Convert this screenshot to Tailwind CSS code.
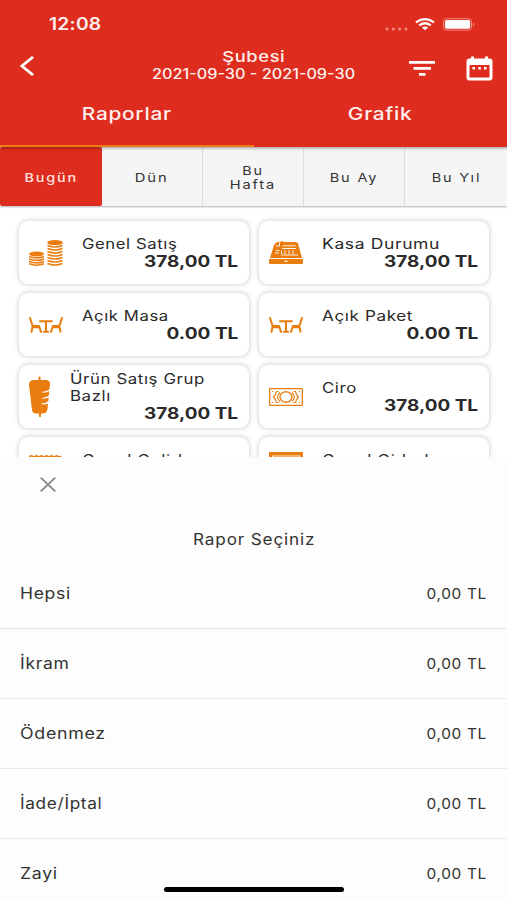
<!DOCTYPE html>
<html lang="tr">
<head>
<meta charset="utf-8">
<title>Raporlar</title>
<script src="https://cdn.jsdelivr.net/npm/@tailwindcss/browser@4"></script>
</head>
<body class="w-[507px] h-[900px] overflow-hidden bg-white font-['Inter',sans-serif] text-[#292929]">
<svg class="hidden">
  <symbol id="table" viewBox="0 0 34 16"><g fill="none" stroke="#e97d10" stroke-width="2" stroke-linecap="round" stroke-linejoin="round"><path d="M1 1 3.700 9 2.500 14.800M3.700 9H10L12 14.800M4 10.200H9.500M33 1 30.300 9 31.500 14.800M30.300 9H24L22 14.800M24.500 10.200H30M11 4.300H23M17 4.300V14.500M14.800 14.700H19.200"/></g></symbol>
</svg>
<div class="flex flex-col h-[900px]">
  <header class="relative z-10 h-[147px] shrink-0 flex flex-col bg-[#de2d1e] text-[#fff0ee] shadow-[0_1px_3px_rgba(0,0,0,0.4)]">
    <div class="h-[49px] flex items-center justify-between pl-[49px] pr-[31px]">
      <span class="inline-block origin-left scale-x-[1.13] text-[17px] font-semibold tracking-[0.2px]">12:08</span>
      <div class="flex items-center">
        <svg class="w-[26px] h-[10px] mt-[8px]" viewBox="0 0 26 10" fill="#f18b80"><circle cx="3" cy="5" r="1.500"/><circle cx="9.300" cy="5" r="1.500"/><circle cx="15.600" cy="5" r="1.500"/><circle cx="22" cy="5" r="1.500"/></svg>
        <svg class="w-[20px] h-[13px] ml-[5px]" viewBox="0 0 20 13" fill="none" stroke="#fff" stroke-width="2.300"><path d="M1 4.400Q10-2 19 4.400M4.200 7.400Q10 3 15.800 7.400"/><path d="M6.800 9.600Q10 7.400 13.200 9.600L10 12.300Z" fill="#fff" stroke="none"/></svg>
        <svg class="w-[33px] h-[13px] ml-[8px]" viewBox="0 0 33 13"><rect x=".5" y=".7" width="28" height="11.400" rx="3" fill="none" stroke="#f08a80"/><rect x="2" y="2" width="25.200" height="8.800" rx="1.800" fill="#fff"/><path d="M30 4.300Q32.800 6.400 30 8.500Z" fill="#ee8378"/></svg>
      </div>
    </div>
    <div class="h-[36px] flex">
      <div class="w-[110px] pl-[20px] pt-[7px]"><svg class="w-[15px] h-[20px]" viewBox="0 0 15 20" fill="none" stroke="#fff" stroke-width="2.800"><path d="M13 1 2 10 13 19"/></svg></div>
      <div class="w-[287px] flex flex-col items-center whitespace-nowrap">
        <span class="leading-[15px] text-[15px] scale-x-[1.22] font-medium tracking-[0.5px]">Şubesi</span>
        <span class="leading-[19px] text-[14px] scale-x-[1.16] font-medium">2021-09-30 - 2021-09-30</span>
      </div>
      <svg class="w-[26px] h-[16px] mt-[12px] ml-[12px]" viewBox="0 0 26 16" fill="#fff"><path d="M0 0H26V2.700H0ZM4.500 6H22V8.700H4.500ZM10 12H16.500V14.700H10Z"/></svg>
      <svg class="w-[27px] h-[25px] mt-[7px] ml-[31px]" viewBox="0 0 27 25"><path fill="#fff" fill-rule="evenodd" d="M5 .5H8V2.500H19V.5H22V2.500H23.500Q26.500 2.500 26.500 5.500V21.500Q26.500 24.500 23.500 24.500H3.500Q.5 24.500 .5 21.500V5.500Q.5 2.500 3.500 2.500H5ZM3.500 9V21.500H23.500V9Z"/><path fill="#fff" d="M6.500 11H9V13.500H6.500ZM12.300 11H14.800V13.500H12.300ZM18 11H20.500V13.500H18Z"/></svg>
    </div>
    <div class="h-[62px] flex text-[17.5px] font-medium">
      <div class="w-[254px] h-full pb-[1px] border-b-[2px] border-[#f07c13] flex items-center justify-center"><span class="scale-x-[1.19] tracking-[0.6px]">Raporlar</span></div>
      <div class="w-[253px] h-full pb-[3px] flex items-center justify-center"><span class="scale-x-[1.19] tracking-[0.6px]">Grafik</span></div>
    </div>
  </header>
  <nav class="h-[59px] shrink-0 grid grid-cols-[102px_101px_101px_101px_102px] bg-[#f5f5f5] text-[12px] leading-[13px] tracking-[1.5px] text-center text-[#333] shadow-[0_1px_2px_rgba(0,0,0,0.3)]">
    <div class="pt-[1px] flex items-center justify-center rounded-[2px] bg-[#de2d1e] text-[#ffe3df] font-medium"><span class="scale-x-[1.2]">Bugün</span></div>
    <div class="pt-[1px] flex items-center justify-center border-r border-[#dedede]"><span class="scale-x-[1.23]">Dün</span></div>
    <div class="pt-[1px] flex flex-col items-center justify-center border-r border-[#dedede]"><span class="leading-[14px] scale-x-[1.2]">Bu</span><span class="leading-[13px] scale-x-[1.22]">Hafta</span></div>
    <div class="pt-[1px] flex items-center justify-center border-r border-[#dedede]"><span class="scale-x-[1.21]">Bu Ay</span></div>
    <div class="pt-[1px] flex items-center justify-center"><span class="scale-x-[1.21]">Bu Yıl</span></div>
  </nav>
  <main class="h-[251px] shrink-0 overflow-hidden pt-[15px] pl-[19px] pr-[18px] whitespace-nowrap">
    <div class="grid grid-cols-[230px_230px] gap-x-[10px] gap-y-[9px] auto-rows-[63px]">
      <section class="rounded-[9px] bg-white shadow-[0_0_4px_1px_rgba(0,0,0,0.17)] flex items-center pl-[10px] pr-[11px]">
        <svg class="w-[34px] h-[26px]" viewBox="0 0 34 26" fill="#e97d10"><ellipse cx="7.500" cy="14" rx="7.500" ry="2.500"/><ellipse cx="26" cy="2.700" rx="7.800" ry="2.600"/><path fill="none" stroke="#e97d10" stroke-width="1.500" d="M0 16.500Q7.500 19.500 15 16.500M0 19Q7.500 22 15 19M0 21.500Q7.500 24.500 15 21.500M0 23.800Q7.500 26.500 15 23.800M18.500 5.500Q26 8.500 33.500 5.500M18.500 8.500Q26 11.500 33.500 8.500M18.500 11.500Q26 14.500 33.500 11.500M18.500 14.500Q26 17.500 33.500 14.500M18.500 17.500Q26 20.500 33.500 17.500M18.500 20.500Q26 23.500 33.500 20.500M18.500 23.500Q26 26.500 33.500 23.500"/></svg>
        <div class="flex-1 pl-[19px] flex flex-col"><span class="self-start origin-left text-[14px] leading-[17px] tracking-[0.5px] scale-x-[1.19]">Genel Satış</span><b class="self-end origin-right text-[15.5px] leading-[19px] font-bold scale-x-[1.22]">378,00 TL</b></div>
      </section>
      <section class="rounded-[9px] bg-white shadow-[0_0_4px_1px_rgba(0,0,0,0.17)] flex items-center pl-[10px] pr-[11px]">
        <svg class="w-[34px] h-[24px]" viewBox="0 0 34 24"><path fill="#e97d10" d="M8 1H12V0H14V1H27Q28.500 1 29 2.500L33 17H1L5 4Z"/><path fill="#e97d10" d="M0 18H34V22Q34 23 33 23H1Q0 23 0 22Z"/><path fill="none" stroke="#fff" stroke-width=".9" d="M7 5H10.500V1.500M13.500 4.800H26.500M13 7.500H27M12.500 9.500V13M16 9V13M20 9V13M24 9V13M7 9.500H10.500M6 12H10M12 14H29"/><path stroke="#fff" stroke-width="1.200" d="M15.500 20.300H18.500"/></svg>
        <div class="flex-1 pl-[19px] flex flex-col"><span class="self-start origin-left text-[14px] leading-[17px] tracking-[0.5px] scale-x-[1.25]">Kasa Durumu</span><b class="self-end origin-right text-[15.5px] leading-[19px] font-bold scale-x-[1.22]">378,00 TL</b></div>
      </section>
      <section class="rounded-[9px] bg-white shadow-[0_0_4px_1px_rgba(0,0,0,0.17)] flex items-center pl-[10px] pr-[11px]">
        <svg class="w-[34px] h-[16px]"><use href="#table"/></svg>
        <div class="flex-1 pl-[19px] flex flex-col"><span class="self-start origin-left text-[14px] leading-[17px] tracking-[0.5px] scale-x-[1.19]">Açık Masa</span><b class="self-end origin-right text-[15.5px] leading-[19px] font-bold scale-x-[1.23]">0.00 TL</b></div>
      </section>
      <section class="rounded-[9px] bg-white shadow-[0_0_4px_1px_rgba(0,0,0,0.17)] flex items-center pl-[10px] pr-[11px]">
        <svg class="w-[34px] h-[16px]"><use href="#table"/></svg>
        <div class="flex-1 pl-[19px] flex flex-col"><span class="self-start origin-left text-[14px] leading-[17px] tracking-[0.5px] scale-x-[1.22]">Açık Paket</span><b class="self-end origin-right text-[15.5px] leading-[19px] font-bold scale-x-[1.23]">0.00 TL</b></div>
      </section>
      <section class="rounded-[9px] bg-white shadow-[0_0_4px_1px_rgba(0,0,0,0.17)] flex items-center pl-[10px] pr-[11px]">
        <svg class="w-[21px] h-[42px]" viewBox="0 0 21 42"><path fill="#e97d10" d="M9.500 1Q10.500 0 11.500 1V4H17Q21.500 4.500 21 8.500L20.600 12.500Q20 15 12 16Q17 17.500 20.200 15L20 19Q18 21.500 11.500 22Q16 23.500 19.700 21.500L19.400 25Q17 27.500 11.500 27.500Q15 29.500 19 27.500L18.500 33Q18 37 14 37.500H12V40.500Q11 42 10 40.500V37.500H7Q3.500 37.500 3 34L0 9Q0 4.500 4 4H9.500Z"/></svg>
        <div class="flex-1 pl-[20px] pt-[1px] flex flex-col"><span class="self-start origin-left text-[14px] leading-[16.5px] tracking-[0.5px] scale-x-[1.2]">Ürün Satış Grup<br>Bazlı</span><b class="self-end origin-right text-[15.5px] leading-[19px] font-bold scale-x-[1.22]">378,00 TL</b></div>
      </section>
      <section class="rounded-[9px] bg-white shadow-[0_0_4px_1px_rgba(0,0,0,0.17)] flex items-center pl-[10px] pr-[11px]">
        <svg class="w-[34px] h-[18px]" viewBox="0 0 34 18" fill="none" stroke="#e97d10"><rect x=".7" y=".7" width="32.600" height="16.600" rx=".6" stroke-width="1.300"/><ellipse cx="17" cy="9" rx="6" ry="5.300" stroke-width="1.400"/><path stroke-width="1.200" d="M9.500 3.500H7.500Q7 6.500 4.500 9 7 11.500 7.500 14.500H9.500M24.500 3.500H26.500Q27 6.500 29.500 9 27 11.500 26.500 14.500H24.500M11 4.500Q6 9 11 13.500M23 4.500Q28 9 23 13.500"/><path stroke-width="1.200" d="M3 3.500H4.200M29.800 3.500H31M3 14.500H4.200M29.800 14.500H31"/></svg>
        <div class="flex-1 pl-[19px] flex flex-col"><span class="self-start origin-left text-[14px] leading-[17px] tracking-[0.5px] scale-x-[1.2]">Ciro</span><b class="self-end origin-right text-[15.5px] leading-[19px] font-bold scale-x-[1.22]">378,00 TL</b></div>
      </section>
      <section class="rounded-[9px] bg-white shadow-[0_0_4px_1px_rgba(0,0,0,0.17)] flex items-center pl-[10px] pr-[11px]">
        <svg class="w-[34px] h-[28px]" viewBox="0 0 34 28" fill="none" stroke="#e97d10" stroke-width="1.600"><path d="M0 1.500 2.500 .8 5 2 7.500 .8 10 2 12.500 .8 15 2 17.500 .8 20 2 22.500 .8 25 2 27.500 .8 30 2 32 1.200M1 4V27H31V4"/></svg>
        <div class="flex-1 pl-[19px] flex flex-col"><span class="self-start origin-left text-[14px] leading-[17px] tracking-[0.5px] scale-x-[1.22]">Genel Gelirler</span><b class="self-end origin-right text-[15.5px] leading-[18px] font-bold scale-x-[1.22]">0,00 TL</b></div>
      </section>
      <section class="rounded-[9px] bg-white shadow-[0_0_4px_1px_rgba(0,0,0,0.17)] flex items-center pl-[10px] pr-[11px]">
        <svg class="w-[34px] h-[33px]" viewBox="0 0 34 33"><path fill="#e97d10" d="M0 0H34V7H31V3.500H3V7H0Z"/><path fill="#f4b26b" d="M4 3.500H30V30H4Z"/></svg>
        <div class="flex-1 pl-[19px] flex flex-col"><span class="self-start origin-left text-[14px] leading-[17px] tracking-[0.5px] scale-x-[1.22]">Genel Giderler</span><b class="self-end origin-right text-[15.5px] leading-[18px] font-bold scale-x-[1.22]">0,00 TL</b></div>
      </section>
    </div>
  </main>
  <div class="relative flex-1 flex flex-col bg-[#fdfdfd] text-[#333] overflow-hidden">
    <div class="h-[55px] shrink-0 pl-[40px] pt-[20px]"><svg class="w-[16px] h-[15px]" viewBox="0 0 16 15" fill="none" stroke="#858585" stroke-width="1.800"><path d="M.7.7 15.300 14.300M15.300.7.7 14.300"/></svg></div>
    <div class="h-[54px] shrink-0 flex justify-center items-center"><span class="pl-[1px] text-[16px] tracking-[0.8px] scale-x-[1.07]">Rapor Seçiniz</span></div>
    <div class="h-[63px] shrink-0 pb-[8px] px-[20px] border-b border-[#e2e2e2] flex items-center justify-between"><span class="pt-[1px] text-[15.5px] tracking-[0.6px] origin-left scale-x-[1.13]">Hepsi</span><span class="text-[14px] tracking-[0.6px] origin-right scale-x-[1.1]">0,00 TL</span></div>
    <div class="h-[70px] shrink-0 px-[20px] border-b border-[#e9e9e9] flex items-center justify-between"><span class="text-[15.5px] tracking-[0.6px] origin-left scale-x-[1.13]">İkram</span><span class="pb-[1px] text-[14px] tracking-[0.6px] origin-right scale-x-[1.1]">0,00 TL</span></div>
    <div class="h-[70px] shrink-0 px-[20px] border-b border-[#e9e9e9] flex items-center justify-between"><span class="text-[15.5px] tracking-[0.6px] origin-left scale-x-[1.15]">Ödenmez</span><span class="pb-[1px] text-[14px] tracking-[0.6px] origin-right scale-x-[1.1]">0,00 TL</span></div>
    <div class="h-[70px] shrink-0 px-[20px] border-b border-[#e9e9e9] flex items-center justify-between"><span class="text-[15.5px] tracking-[0.6px] origin-left scale-x-[1.11]">İade/İptal</span><span class="pb-[1px] text-[14px] tracking-[0.6px] origin-right scale-x-[1.1]">0,00 TL</span></div>
    <div class="h-[69px] shrink-0 px-[20px] flex items-center justify-between"><span class="text-[15.5px] tracking-[0.6px] origin-left scale-x-[1.14]">Zayi</span><span class="pb-[1px] text-[14px] tracking-[0.6px] origin-right scale-x-[1.1]">0,00 TL</span></div>
    <div class="absolute left-[164px] bottom-[8px] w-[180px] h-[5px] rounded-full bg-black"></div>
  </div>
</div>
</body>
</html>
